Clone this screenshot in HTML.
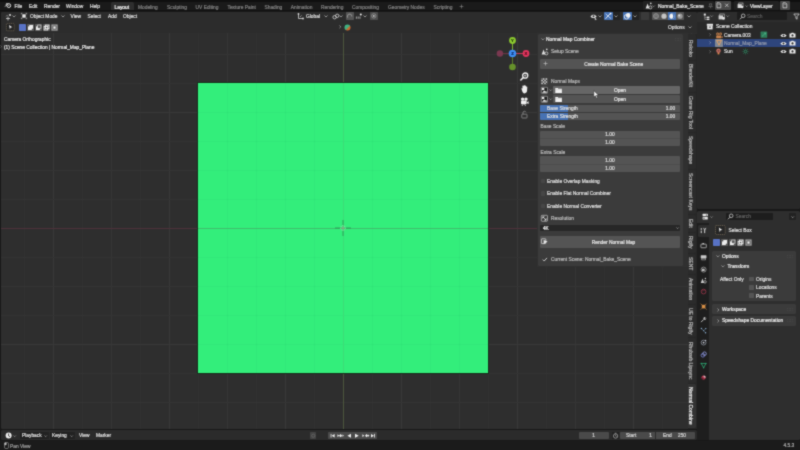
<!DOCTYPE html>
<html><head><meta charset="utf-8"><title>Blender</title>
<style>
html,body{margin:0;padding:0;background:#181818;}
body{width:800px;height:450px;overflow:hidden;position:relative;font-family:"Liberation Sans",sans-serif;}
#r{position:absolute;left:0;top:0;width:800px;height:450px;overflow:hidden;will-change:transform;filter:url(#sb);}
#r div,#r svg{position:absolute;}
#r svg{overflow:visible;}
.t{white-space:nowrap;letter-spacing:0;-webkit-text-stroke:0.22px currentColor;}
.v{writing-mode:vertical-rl;}
</style></head><body><svg width="0" height="0" style="position:absolute"><defs><filter id="sb" x="0" y="0" width="100%" height="100%" color-interpolation-filters="sRGB"><feConvolveMatrix order="3" kernelMatrix="0.03 0.1 0.03 0.1 0.48 0.1 0.03 0.1 0.03" divisor="1" edgeMode="duplicate" preserveAlpha="true"/></filter></defs></svg><div id="r">
<div style="left:0px;top:0px;width:800px;height:450px;background:#181818;"></div>
<div style="left:0px;top:0px;width:800px;height:2px;background:#0f0f0f;"></div>
<div style="left:0px;top:2px;width:800px;height:8.2px;background:#1a1a1a;"></div>
<div style="left:0px;top:10.2px;width:800px;height:1.3px;background:#111111;"></div>
<div style="left:1px;top:11.5px;width:695.5px;height:417.3px;background:#2e2e2e;border-radius:1.5px;"></div>
<div style="left:23.7px;top:11.5px;width:1px;height:417.3px;background:#313131"></div><div style="left:52.7px;top:11.5px;width:1px;height:417.3px;background:#383838"></div><div style="left:81.7px;top:11.5px;width:1px;height:417.3px;background:#313131"></div><div style="left:110.7px;top:11.5px;width:1px;height:417.3px;background:#353535"></div><div style="left:139.7px;top:11.5px;width:1px;height:417.3px;background:#313131"></div><div style="left:168.7px;top:11.5px;width:1px;height:417.3px;background:#383838"></div><div style="left:197.7px;top:11.5px;width:1px;height:417.3px;background:#313131"></div><div style="left:226.7px;top:11.5px;width:1px;height:417.3px;background:#353535"></div><div style="left:255.7px;top:11.5px;width:1px;height:417.3px;background:#313131"></div><div style="left:284.7px;top:11.5px;width:1px;height:417.3px;background:#383838"></div><div style="left:313.7px;top:11.5px;width:1px;height:417.3px;background:#313131"></div><div style="left:371.7px;top:11.5px;width:1px;height:417.3px;background:#313131"></div><div style="left:400.7px;top:11.5px;width:1px;height:417.3px;background:#383838"></div><div style="left:429.7px;top:11.5px;width:1px;height:417.3px;background:#313131"></div><div style="left:458.7px;top:11.5px;width:1px;height:417.3px;background:#353535"></div><div style="left:487.7px;top:11.5px;width:1px;height:417.3px;background:#313131"></div><div style="left:516.7px;top:11.5px;width:1px;height:417.3px;background:#383838"></div><div style="left:545.7px;top:11.5px;width:1px;height:417.3px;background:#313131"></div><div style="left:574.7px;top:11.5px;width:1px;height:417.3px;background:#353535"></div><div style="left:603.7px;top:11.5px;width:1px;height:417.3px;background:#313131"></div><div style="left:632.7px;top:11.5px;width:1px;height:417.3px;background:#383838"></div><div style="left:661.7px;top:11.5px;width:1px;height:417.3px;background:#313131"></div><div style="left:690.7px;top:11.5px;width:1px;height:417.3px;background:#353535"></div><div style="left:1px;top:24.9px;width:695.5px;height:1px;background:#333333"></div><div style="left:1px;top:53.9px;width:695.5px;height:1px;background:#343434"></div><div style="left:1px;top:82.9px;width:695.5px;height:1px;background:#333333"></div><div style="left:1px;top:111.9px;width:695.5px;height:1px;background:#383838"></div><div style="left:1px;top:140.9px;width:695.5px;height:1px;background:#333333"></div><div style="left:1px;top:169.9px;width:695.5px;height:1px;background:#343434"></div><div style="left:1px;top:198.9px;width:695.5px;height:1px;background:#333333"></div><div style="left:1px;top:256.9px;width:695.5px;height:1px;background:#333333"></div><div style="left:1px;top:285.9px;width:695.5px;height:1px;background:#343434"></div><div style="left:1px;top:314.9px;width:695.5px;height:1px;background:#333333"></div><div style="left:1px;top:343.9px;width:695.5px;height:1px;background:#383838"></div><div style="left:1px;top:372.9px;width:695.5px;height:1px;background:#333333"></div><div style="left:1px;top:401.9px;width:695.5px;height:1px;background:#343434"></div>
<div style="left:1px;top:227.9px;width:695.5px;height:1px;background:#4d313a;"></div>
<div style="left:342.7px;top:11.5px;width:1px;height:417.3px;background:#4c563c;"></div>
<div style="left:196.9px;top:81.9px;width:292.3px;height:292.3px;background:#17301c;"></div>
<div style="left:197.8px;top:82.8px;width:290.5px;height:290.5px;background:#33ee7b;"></div>
<div style="left:226.7px;top:83px;width:1px;height:290.3px;background:rgba(40,190,105,0.13);"></div>
<div style="left:198px;top:111.9px;width:290.3px;height:1px;background:rgba(40,190,105,0.13);"></div>
<div style="left:255.7px;top:83px;width:1px;height:290.3px;background:rgba(40,190,105,0.13);"></div>
<div style="left:198px;top:140.9px;width:290.3px;height:1px;background:rgba(40,190,105,0.13);"></div>
<div style="left:284.7px;top:83px;width:1px;height:290.3px;background:rgba(40,190,105,0.13);"></div>
<div style="left:198px;top:169.9px;width:290.3px;height:1px;background:rgba(40,190,105,0.13);"></div>
<div style="left:313.7px;top:83px;width:1px;height:290.3px;background:rgba(40,190,105,0.13);"></div>
<div style="left:198px;top:198.9px;width:290.3px;height:1px;background:rgba(40,190,105,0.13);"></div>
<div style="left:371.7px;top:83px;width:1px;height:290.3px;background:rgba(40,190,105,0.13);"></div>
<div style="left:198px;top:256.9px;width:290.3px;height:1px;background:rgba(40,190,105,0.13);"></div>
<div style="left:400.7px;top:83px;width:1px;height:290.3px;background:rgba(40,190,105,0.13);"></div>
<div style="left:198px;top:285.9px;width:290.3px;height:1px;background:rgba(40,190,105,0.13);"></div>
<div style="left:429.7px;top:83px;width:1px;height:290.3px;background:rgba(40,190,105,0.13);"></div>
<div style="left:198px;top:314.9px;width:290.3px;height:1px;background:rgba(40,190,105,0.13);"></div>
<div style="left:458.7px;top:83px;width:1px;height:290.3px;background:rgba(40,190,105,0.13);"></div>
<div style="left:198px;top:343.9px;width:290.3px;height:1px;background:rgba(40,190,105,0.13);"></div>
<div style="left:198px;top:227.9px;width:290.3px;height:1px;background:#40bd6d;"></div>
<div style="left:342.7px;top:83px;width:1px;height:290.3px;background:#3cdc77;"></div>
<svg style="left:334.2px;top:219.4px;" width="18" height="18" viewBox="0 0 18 18"><path d="M9 1V6.6M9 11.4V17M1 9H6.6M11.4 9H17" stroke="#2f8a52" stroke-width="0.8"/><circle cx="9" cy="9" r="2.4" fill="none" stroke="#d8e6d0" stroke-width="0.7" stroke-dasharray="1 0.9" opacity="0.8"/><circle cx="9" cy="9" r="1.5" fill="#8f9d80" opacity="0.85"/></svg>
<div style="left:1px;top:11.5px;width:695.5px;height:21.5px;background:#2c2c2c;border-radius:1.5px 1.5px 0 0;"></div>
<svg style="left:5px;top:12.5px;" width="8" height="7" viewBox="0 0 8 7"><path d="M1 5.5h4M3 3.5v4" stroke="#d0d0d0" stroke-width="0.8"/><circle cx="5" cy="2" r="1.1" fill="#d0d0d0"/><path d="M1.2 3.4l1.5-1.5" stroke="#d0d0d0" stroke-width="0.6"/></svg>
<svg style="left:12.2px;top:15.05px;" width="4.0" height="2.5" viewBox="0 0 4.0 2.5"><path d="M0.5 0.5 L2.0 2.0 L3.5 0.5" fill="none" stroke="#c0c0c0" stroke-width="0.7"/></svg>
<svg style="left:21.3px;top:13px;" width="6" height="6" viewBox="0 0 6 6"><rect x="1.3" y="1.3" width="3.4" height="3.4" fill="#e6e6e6"/><path d="M0.3 1.4V0.3H1.4M4.6 0.3H5.7V1.4M5.7 4.6V5.7H4.6M1.4 5.7H0.3V4.6" fill="none" stroke="#e6e6e6" stroke-width="0.55"/></svg>
<div class="t" style="top:14.00px;line-height:6px;font-size:4.85px;color:#d9d9d9;left:30px;">Object Mode</div>
<svg style="left:60.5px;top:15.05px;" width="4.0" height="2.5" viewBox="0 0 4.0 2.5"><path d="M0.5 0.5 L2.0 2.0 L3.5 0.5" fill="none" stroke="#c0c0c0" stroke-width="0.7"/></svg>
<div class="t" style="top:14.00px;line-height:6px;font-size:4.85px;color:#d9d9d9;left:70.5px;">View</div>
<div class="t" style="top:14.00px;line-height:6px;font-size:4.85px;color:#d9d9d9;left:87.5px;">Select</div>
<div class="t" style="top:14.00px;line-height:6px;font-size:4.85px;color:#d9d9d9;left:108px;">Add</div>
<div class="t" style="top:14.00px;line-height:6px;font-size:4.85px;color:#d9d9d9;left:123px;">Object</div>
<svg style="left:6.1px;top:23px;" width="8.6" height="8.2" viewBox="0 0 8.6 8.2"><rect x="0.4" y="0.4" width="7.8" height="7.4" rx="0.8" fill="#242424" stroke="#8a7a63" stroke-width="0.55" stroke-dasharray="1.2 0.7"/><path d="M3 2L6.4 4.3L4.6 4.6L3.9 6.3Z" fill="#f0f0f0"/></svg>
<div style="left:18.8px;top:23.9px;width:7.4px;height:7.1px;background:#5872c4;border-radius:0.8px;"></div>
<div style="left:27.1px;top:23.9px;width:7px;height:7.1px;background:#575757;border-radius:0.6px;"></div>
<div style="left:35px;top:23.9px;width:7px;height:7.1px;background:#575757;border-radius:0.6px;"></div>
<div style="left:42.9px;top:23.9px;width:7px;height:7.1px;background:#575757;border-radius:0.6px;"></div>
<div style="left:50.7px;top:23.9px;width:7px;height:7.1px;background:#575757;border-radius:0.6px;"></div>
<svg style="left:27.1px;top:23.9px;" width="7" height="7.1" viewBox="0 0 7 7.1"><rect x="1" y="2.4" width="3.8" height="3.7" fill="#ececec"/><rect x="2.3" y="1" width="3.8" height="3.7" fill="#ececec"/></svg>
<svg style="left:35px;top:23.9px;" width="7" height="7.1" viewBox="0 0 7 7.1"><rect x="1" y="2.4" width="3.8" height="3.7" fill="#ececec"/><rect x="2.7" y="1" width="3.3" height="3.2" fill="#575757" stroke="#ececec" stroke-width="0.6"/></svg>
<svg style="left:42.9px;top:23.9px;" width="7" height="7.1" viewBox="0 0 7 7.1"><rect x="1.1" y="2.4" width="3.6" height="3.6" fill="none" stroke="#ececec" stroke-width="0.9"/><rect x="2.4" y="1.1" width="3.6" height="3.6" fill="none" stroke="#ececec" stroke-width="0.9"/></svg>
<svg style="left:50.7px;top:23.9px;" width="7" height="7.1" viewBox="0 0 7 7.1"><rect x="1" y="1.1" width="5" height="4.9" fill="none" stroke="#bdbdbd" stroke-width="0.7"/><rect x="2.4" y="2.4" width="2.2" height="2.3" fill="#f4f4f4"/></svg>
<div class="t" style="top:37.00px;line-height:6px;font-size:4.85px;color:#e8e8e8;left:4px;text-shadow:0 0 1px #000;">Camera Orthographic</div>
<div class="t" style="top:45.00px;line-height:6px;font-size:4.85px;color:#e8e8e8;left:4px;text-shadow:0 0 1px #000;">(1) Scene Collection | Normal_Map_Plane</div>
<svg style="left:0.25px;top:45.3px;" width="2.1" height="3.2" viewBox="0 0 2.1 3.2"><path d="M0.5 0.5 L1.6 1.6 L0.5 2.7" fill="none" stroke="#9a9a9a" stroke-width="0.5"/></svg>
<svg style="left:297px;top:12.5px;" width="7" height="7" viewBox="0 0 7 7"><path d="M1.5 0.8V5.5H6.2" fill="none" stroke="#d6d6d6" stroke-width="0.8"/><circle cx="1.5" cy="1" r="0.9" fill="#d6d6d6"/><circle cx="6" cy="5.5" r="0.9" fill="#d6d6d6"/><path d="M3 4l1.6-1.6" stroke="#d6d6d6" stroke-width="0.6"/></svg>
<div class="t" style="top:14.00px;line-height:6px;font-size:4.85px;color:#d9d9d9;left:306px;">Global</div>
<svg style="left:323.5px;top:15.05px;" width="4.0" height="2.5" viewBox="0 0 4.0 2.5"><path d="M0.5 0.5 L2.0 2.0 L3.5 0.5" fill="none" stroke="#c0c0c0" stroke-width="0.7"/></svg>
<svg style="left:331.5px;top:12.5px;" width="8" height="7" viewBox="0 0 8 7"><circle cx="2.6" cy="4.2" r="1.7" fill="none" stroke="#d6d6d6" stroke-width="0.8"/><circle cx="5.2" cy="2.8" r="1.7" fill="none" stroke="#d6d6d6" stroke-width="0.8"/></svg>
<svg style="left:339.3px;top:15.05px;" width="4.0" height="2.5" viewBox="0 0 4.0 2.5"><path d="M0.5 0.5 L2.0 2.0 L3.5 0.5" fill="none" stroke="#c0c0c0" stroke-width="0.7"/></svg>
<div style="left:346px;top:12.3px;width:7.6px;height:7.8px;background:#555555;border-radius:0.8px;"></div>
<svg style="left:346px;top:12.3px;" width="7.6" height="7.8" viewBox="0 0 7.6 7.8"><path d="M1.8 5.6A2.2 2.2 0 1 1 5.8 4.4" fill="none" stroke="#8d8d8d" stroke-width="1.1"/></svg>
<svg style="left:354.5px;top:12.5px;" width="8" height="7" viewBox="0 0 8 7"><path d="M0.8 5.2h1.2M2.6 5.2h1.2M4.4 5.2h1.2M0.8 3.8h0M1.4 3.4v1.8M3.2 3.4v1.8M5 3.4v1.8" stroke="#cfcfcf" stroke-width="0.6"/><circle cx="5.8" cy="1.6" r="1" fill="#f0f0f0"/></svg>
<svg style="left:363.0px;top:15.05px;" width="4.0" height="2.5" viewBox="0 0 4.0 2.5"><path d="M0.5 0.5 L2.0 2.0 L3.5 0.5" fill="none" stroke="#c0c0c0" stroke-width="0.7"/></svg>
<div style="left:370px;top:12.3px;width:7.6px;height:7.8px;background:#4e4e4e;border-radius:0.8px;"></div>
<svg style="left:370px;top:12.3px;" width="7.6" height="7.8" viewBox="0 0 7.6 7.8"><circle cx="3.8" cy="3.9" r="2.2" fill="none" stroke="#9c9c9c" stroke-width="0.7"/><circle cx="3.8" cy="3.9" r="0.9" fill="#c9c9c9"/></svg>
<svg style="left:339.15000000000003px;top:25.2px;" width="2.3" height="3.6" viewBox="0 0 2.3 3.6"><path d="M0.5 0.5 L1.8 1.8 L0.5 3.1" fill="none" stroke="#c9c9c9" stroke-width="0.6"/></svg>
<svg style="left:343.5px;top:23.6px;" width="7" height="7" viewBox="0 0 7 7"><defs><linearGradient id="gg" x1="0" y1="0" x2="1" y2="1"><stop offset="0" stop-color="#35c28f"/><stop offset="0.55" stop-color="#4aa878"/><stop offset="0.6" stop-color="#c8692f"/><stop offset="1" stop-color="#d2632c"/></linearGradient></defs><circle cx="3.5" cy="3.5" r="3" fill="url(#gg)"/></svg>
<svg style="left:589.5px;top:12.5px;" width="8" height="7.5" viewBox="0 0 8 7.5"><path d="M0.5 3.4C2 1.2 5 1.2 6.6 3.4C5 5.4 2 5.4 0.5 3.4Z" fill="#e6e6e6"/><circle cx="3.5" cy="3.3" r="1" fill="#303030"/><path d="M4.6 4.4L7 6.6L5.6 6.5L5 7.4Z" fill="#e6e6e6"/></svg>
<svg style="left:597.6px;top:15.05px;" width="4.0" height="2.5" viewBox="0 0 4.0 2.5"><path d="M0.5 0.5 L2.0 2.0 L3.5 0.5" fill="none" stroke="#c0c0c0" stroke-width="0.7"/></svg>
<div style="left:604px;top:12.1px;width:8.6px;height:8.3px;background:#4772b3;border-radius:0.8px;"></div>
<svg style="left:604px;top:12.1px;" width="8.6" height="8.3" viewBox="0 0 8.6 8.3"><path d="M1.5 6.8L6.2 1.6" stroke="#f2f2f2" stroke-width="0.9"/><path d="M1.6 1.8L4.2 4.2L7 6.6" stroke="#d6e2f5" stroke-width="0.8" fill="none"/><circle cx="6.6" cy="1.6" r="0.9" fill="#fff"/></svg>
<div style="left:612.9px;top:12.1px;width:7px;height:8.3px;background:#222222;border-radius:0.8px;"></div>
<svg style="left:614.3px;top:15.05px;" width="4.0" height="2.5" viewBox="0 0 4.0 2.5"><path d="M0.5 0.5 L2.0 2.0 L3.5 0.5" fill="none" stroke="#c0c0c0" stroke-width="0.7"/></svg>
<div style="left:623px;top:12.1px;width:8.6px;height:8.3px;background:#4772b3;border-radius:0.8px;"></div>
<svg style="left:623px;top:12.1px;" width="8.6" height="8.3" viewBox="0 0 8.6 8.3"><circle cx="3.6" cy="4.8" r="2.3" fill="none" stroke="#f2f2f2" stroke-width="0.8"/><circle cx="5.2" cy="3.4" r="2.3" fill="#f2f2f2"/></svg>
<div style="left:631.9px;top:12.1px;width:7px;height:8.3px;background:#222222;border-radius:0.8px;"></div>
<svg style="left:633.3px;top:15.05px;" width="4.0" height="2.5" viewBox="0 0 4.0 2.5"><path d="M0.5 0.5 L2.0 2.0 L3.5 0.5" fill="none" stroke="#c0c0c0" stroke-width="0.7"/></svg>
<div style="left:640.5px;top:12.1px;width:8px;height:8.3px;background:#3a3a3a;border-radius:0.8px;"></div>
<div style="left:652px;top:12.1px;width:32px;height:8.3px;background:#545454;border-radius:0.8px;"></div>
<div style="left:668px;top:12.1px;width:8px;height:8.3px;background:#4772b3;"></div>
<svg style="left:652px;top:12.1px;" width="32" height="8.3" viewBox="0 0 32 8.3"><circle cx="4" cy="4.15" r="2.5" fill="none" stroke="#b8b8b8" stroke-width="0.6"/><circle cx="4" cy="4.15" r="1.3" fill="none" stroke="#b8b8b8" stroke-width="0.5"/><circle cx="12" cy="4.15" r="2.6" fill="#c4c4c4"/><circle cx="20" cy="4.15" r="2.6" fill="#f4f4f4"/><path d="M20 1.55A2.6 2.6 0 0 1 20 6.75A3.4 3.4 0 0 0 20 1.55Z" fill="#4772b3"/><circle cx="28" cy="4.15" r="2.6" fill="#9a9a9a"/><circle cx="27.2" cy="3.4" r="1" fill="#dcdcdc"/></svg>
<svg style="left:686.5px;top:15.05px;" width="4.0" height="2.5" viewBox="0 0 4.0 2.5"><path d="M0.5 0.5 L2.0 2.0 L3.5 0.5" fill="none" stroke="#c0c0c0" stroke-width="0.7"/></svg>
<div class="t" style="top:25.00px;line-height:6px;font-size:4.85px;color:#d9d9d9;left:668px;">Options</div>
<svg style="left:687.5px;top:26.25px;" width="4.0" height="2.5" viewBox="0 0 4.0 2.5"><path d="M0.5 0.5 L2.0 2.0 L3.5 0.5" fill="none" stroke="#c0c0c0" stroke-width="0.7"/></svg>
<svg style="left:495px;top:35.6px;" width="38" height="38" viewBox="-3 -3 38 38"><path d="M14.5 14.5H1.5" stroke="#7a3248" stroke-width="0.8"/><path d="M14.5 14.5V28" stroke="#66912b" stroke-width="0.8"/>
<path d="M14.5 14.5H28" stroke="#d8385c" stroke-width="0.9"/><path d="M14.5 14.5V1.5" stroke="#86c232" stroke-width="0.9"/>
<circle cx="1.9" cy="14.5" r="3.2" fill="#7a3850"/><circle cx="14.5" cy="28" r="3.3" fill="#66912b"/>
<circle cx="28" cy="14.5" r="3.4" fill="#e0355d"/><circle cx="14.5" cy="1.5" r="3.4" fill="#8cc92f"/>
<circle cx="14.5" cy="14.5" r="3.8" fill="#3d8df2"/></svg>
<div class="t" style="top:38.00px;line-height:6px;font-size:4.2px;color:#1d3508;left:462.5px;width:100px;text-align:center;font-weight:bold;">Y</div>
<div class="t" style="top:51.00px;line-height:6px;font-size:4.2px;color:#5c0c1f;left:476px;width:100px;text-align:center;font-weight:bold;">X</div>
<div class="t" style="top:51.00px;line-height:6px;font-size:4.2px;color:#0e2c66;left:462.5px;width:100px;text-align:center;font-weight:bold;">Z</div>
<svg style="left:519px;top:71px;" width="11" height="11" viewBox="0 0 11 11"><circle cx="6.2" cy="4.6" r="2.6" fill="none" stroke="#efefef" stroke-width="1.3"/><path d="M4.2 6.6L1.8 9" stroke="#efefef" stroke-width="1.5" stroke-linecap="round"/><path d="M5 4.6h2.4M6.2 3.4v2.4" stroke="#efefef" stroke-width="0.6"/></svg>
<svg style="left:519px;top:83.5px;" width="11" height="11" viewBox="0 0 11 11"><path d="M2.6 5.2C2 4.4 3 3.8 3.6 4.6L3.4 2.2C3.4 1.4 4.4 1.4 4.5 2.2L4.7 1.4C4.8 0.7 5.8 0.8 5.8 1.6L6 1.9C6.2 1.2 7.1 1.4 7.1 2.1L7.3 2.9C7.6 2.3 8.4 2.6 8.3 3.3L8.1 6.6C8 8.4 7 9.4 5.6 9.4C4.2 9.4 3.4 8.4 2.6 5.2Z" fill="#efefef"/></svg>
<svg style="left:519px;top:96px;" width="11" height="11" viewBox="0 0 11 11"><circle cx="3.6" cy="3.1" r="1.7" fill="#efefef"/><circle cx="7" cy="3.1" r="1.7" fill="#efefef"/><rect x="2" y="4.6" width="5.6" height="3.6" rx="0.6" fill="#efefef"/><path d="M7.6 6.4L9.6 5.2V8L7.6 7Z" fill="#efefef"/><path d="M4 8.2L3 10M5.6 8.2L6.6 10" stroke="#efefef" stroke-width="0.7"/></svg>
<svg style="left:519px;top:108.5px;" width="11" height="11" viewBox="0 0 11 11"><rect x="2.8" y="5.2" width="5.2" height="3.8" rx="0.5" fill="none" stroke="#9b9b9b" stroke-width="0.7"/><path d="M4 5.2V3.6A1.5 1.5 0 0 1 6.9 3.2" fill="none" stroke="#9b9b9b" stroke-width="0.7"/></svg>
<div style="left:537.0px;top:33.2px;width:150.5px;height:233.5px;background:#303030;"></div>
<div style="left:537.8px;top:33.9px;width:145.7px;height:232.4px;background:#3b3b3b;border-radius:1.5px;"></div>
<svg style="left:540.6px;top:37.8px;" width="3.8" height="2.4" viewBox="0 0 3.8 2.4"><path d="M0.5 0.5 L1.9 1.9 L3.3 0.5" fill="none" stroke="#cfcfcf" stroke-width="0.6"/></svg>
<div class="t" style="top:37.00px;line-height:6px;font-size:4.85px;color:#e6e6e6;left:546px;">Normal Map Combiner</div>
<svg style="left:675px;top:37.5px;" width="6" height="3" viewBox="0 0 6 3"><g fill="#555"><circle cx="0.7" cy="0.7" r="0.4"/><circle cx="2.2" cy="0.7" r="0.4"/><circle cx="3.7" cy="0.7" r="0.4"/><circle cx="5.2" cy="0.7" r="0.4"/><circle cx="0.7" cy="2.2" r="0.4"/><circle cx="2.2" cy="2.2" r="0.4"/><circle cx="3.7" cy="2.2" r="0.4"/><circle cx="5.2" cy="2.2" r="0.4"/></g></svg>
<svg style="left:540.5px;top:47.6px;" width="8" height="7.5" viewBox="0 0 8 7.5"><path d="M0.6 6.6L2.6 1.4L4.4 6.6Z" fill="#e2e2e2"/><circle cx="5.4" cy="5.4" r="1.5" fill="none" stroke="#e2e2e2" stroke-width="0.7"/><circle cx="5.8" cy="1.4" r="0.8" fill="#e2e2e2"/></svg>
<div class="t" style="top:49.00px;line-height:6px;font-size:4.85px;color:#b6b6b6;left:551px;">Setup Scene</div>
<div style="left:540.3px;top:58.6px;width:140.0px;height:10.6px;background:#545454;border-radius:1px;"></div>
<svg style="left:543px;top:61.4px;" width="5" height="5" viewBox="0 0 5 5"><path d="M2.5 0.5V4.5M0.5 2.5H4.5" stroke="#c8c8c8" stroke-width="0.6"/></svg>
<div class="t" style="top:62.00px;line-height:6px;font-size:4.85px;color:#e0e0e0;left:563.7px;width:100px;text-align:center;">Create Normal Bake Scene</div>
<svg style="left:541px;top:78px;" width="6.5" height="6.5" viewBox="0 0 6.5 6.5"><rect x="0.3" y="0.3" width="5.9" height="5.9" fill="#d8d8d8"/><g fill="#3b3b3b"><rect x="0.3" y="0.3" width="1.5" height="1.5"/><rect x="3.25" y="0.3" width="1.5" height="1.5"/><rect x="1.8" y="1.8" width="1.5" height="1.5"/><rect x="4.7" y="1.8" width="1.5" height="1.5"/><rect x="0.3" y="3.25" width="1.5" height="1.5"/><rect x="3.25" y="3.25" width="1.5" height="1.5"/><rect x="1.8" y="4.7" width="1.5" height="1.5"/><rect x="4.7" y="4.7" width="1.5" height="1.5"/></g></svg>
<div class="t" style="top:79.00px;line-height:6px;font-size:4.85px;color:#b6b6b6;left:551px;">Normal Maps</div>
<svg style="left:541px;top:86.7px;" width="7" height="6.6" viewBox="0 0 7 6.6"><rect x="0.3" y="0.3" width="6.2" height="6" rx="0.5" fill="#1e1e1e" stroke="#d8d8d8" stroke-width="0.5"/><rect x="0.9" y="0.9" width="2.4" height="2.2" fill="#e8e8e8"/><path d="M1 5.8L3.2 3.4L4.4 4.6L5.2 4L6 5.8Z" fill="#e8e8e8"/></svg>
<svg style="left:548.9px;top:89.2px;" width="3.4" height="2.2" viewBox="0 0 3.4 2.2"><path d="M0.5 0.5 L1.7 1.7 L2.9 0.5" fill="none" stroke="#bdbdbd" stroke-width="0.55"/></svg>
<div style="left:553px;top:86.3px;width:127.29999999999995px;height:7.3px;background:#666666;border-radius:1px;"></div>
<svg style="left:554.8px;top:86.7px;" width="7.4" height="6.6" viewBox="0 0 7.4 6.6"><path d="M0.3 0.9H2.8L3.4 1.8H6.9V6H0.3Z" fill="#f2f2f2"/><path d="M0.3 2.7H6.9" stroke="#a8a8a8" stroke-width="0.3"/></svg>
<div class="t" style="top:88.00px;line-height:6px;font-size:4.85px;color:#e4e4e4;left:570px;width:100px;text-align:center;">Open</div>
<svg style="left:541px;top:95.80000000000001px;" width="7" height="6.6" viewBox="0 0 7 6.6"><rect x="0.3" y="0.3" width="6.2" height="6" rx="0.5" fill="#1e1e1e" stroke="#d8d8d8" stroke-width="0.5"/><rect x="0.9" y="0.9" width="2.4" height="2.2" fill="#e8e8e8"/><path d="M1 5.8L3.2 3.4L4.4 4.6L5.2 4L6 5.8Z" fill="#e8e8e8"/></svg>
<svg style="left:548.9px;top:98.2px;" width="3.4" height="2.2" viewBox="0 0 3.4 2.2"><path d="M0.5 0.5 L1.7 1.7 L2.9 0.5" fill="none" stroke="#bdbdbd" stroke-width="0.55"/></svg>
<div style="left:553px;top:95.4px;width:127.29999999999995px;height:7.2px;background:#545454;border-radius:1px;"></div>
<svg style="left:554.8px;top:95.7px;" width="7.4" height="6.6" viewBox="0 0 7.4 6.6"><path d="M0.3 0.9H2.8L3.4 1.8H6.9V6H0.3Z" fill="#f2f2f2"/><path d="M0.3 2.7H6.9" stroke="#a8a8a8" stroke-width="0.3"/></svg>
<div class="t" style="top:97.00px;line-height:6px;font-size:4.85px;color:#e4e4e4;left:570px;width:100px;text-align:center;">Open</div>
<div style="left:540.3px;top:104.5px;width:140.0px;height:15.6px;background:#545454;border-radius:1px;"></div>
<div style="left:540.3px;top:104.5px;width:27.4px;height:15.6px;background:#4772b3;border-radius:1px 0 0 1px;"></div>
<div style="left:540.3px;top:112.1px;width:140.0px;height:0.5px;background:#3b3b3b;"></div>
<div class="t" style="top:106.00px;line-height:6px;font-size:4.85px;color:#dcdcdc;left:547px;">Base Strength</div>
<div class="t" style="top:114.00px;line-height:6px;font-size:4.85px;color:#dcdcdc;left:547px;">Extra Strength</div>
<div class="t" style="top:106.00px;line-height:6px;font-size:4.85px;color:#dcdcdc;left:575.2px;width:100px;text-align:right;">1.00</div>
<div class="t" style="top:114.00px;line-height:6px;font-size:4.85px;color:#dcdcdc;left:575.2px;width:100px;text-align:right;">1.00</div>
<div class="t" style="top:124.00px;line-height:6px;font-size:4.85px;color:#b6b6b6;left:540.5px;">Base Scale</div>
<div style="left:540.3px;top:131px;width:140.0px;height:14.9px;background:#545454;border-radius:1px;"></div>
<div style="left:540.3px;top:138.3px;width:140.0px;height:0.5px;background:#4d4d4d;"></div>
<div class="t" style="top:132.00px;line-height:6px;font-size:4.85px;color:#dcdcdc;left:560px;width:100px;text-align:center;">1.00</div>
<div class="t" style="top:140.00px;line-height:6px;font-size:4.85px;color:#dcdcdc;left:560px;width:100px;text-align:center;">1.00</div>
<div class="t" style="top:150.00px;line-height:6px;font-size:4.85px;color:#b6b6b6;left:540.5px;">Extra Scale</div>
<div style="left:540.3px;top:156.3px;width:140.0px;height:15.6px;background:#545454;border-radius:1px;"></div>
<div style="left:540.3px;top:164px;width:140.0px;height:0.5px;background:#4d4d4d;"></div>
<div class="t" style="top:158.00px;line-height:6px;font-size:4.85px;color:#dcdcdc;left:560px;width:100px;text-align:center;">1.00</div>
<div class="t" style="top:166.00px;line-height:6px;font-size:4.85px;color:#dcdcdc;left:560px;width:100px;text-align:center;">1.00</div>
<div style="left:541px;top:178.7px;width:4.4px;height:4.6px;background:#464646;border-radius:0.7px;"></div>
<div class="t" style="top:179.00px;line-height:6px;font-size:4.85px;color:#dcdcdc;left:547px;">Enable Overlap Masking</div>
<div style="left:541px;top:191.1px;width:4.4px;height:4.6px;background:#464646;border-radius:0.7px;"></div>
<div class="t" style="top:191.00px;line-height:6px;font-size:4.85px;color:#dcdcdc;left:547px;">Enable Flat Normal Combiner</div>
<div style="left:541px;top:203.6px;width:4.4px;height:4.6px;background:#464646;border-radius:0.7px;"></div>
<div class="t" style="top:204.00px;line-height:6px;font-size:4.85px;color:#dcdcdc;left:547px;">Enable Normal Converter</div>
<svg style="left:541px;top:214.8px;" width="7" height="6.6" viewBox="0 0 7 6.6"><rect x="0.3" y="0.3" width="6.2" height="6" rx="0.8" fill="none" stroke="#d8d8d8" stroke-width="0.6"/><path d="M1.4 1.4H3.8L1.4 3.8Z" fill="#e8e8e8"/><path d="M2 2L4.8 4.8" stroke="#e8e8e8" stroke-width="0.7"/><path d="M3 5.4H5.4V3Z" fill="#e8e8e8"/></svg>
<div class="t" style="top:216.00px;line-height:6px;font-size:4.85px;color:#b6b6b6;left:551px;">Resolution</div>
<div style="left:540.3px;top:224.6px;width:140.0px;height:6.3px;background:#272727;border-radius:1px;"></div>
<div class="t" style="top:226.00px;line-height:6px;font-size:4.7px;color:#ececec;left:543px;">4K</div>
<svg style="left:676.1999999999999px;top:226.95px;" width="3.2" height="2.1" viewBox="0 0 3.2 2.1"><path d="M0.5 0.5 L1.6 1.6 L2.7 0.5" fill="none" stroke="#c8c8c8" stroke-width="0.55"/></svg>
<div style="left:540.3px;top:235.9px;width:140.0px;height:11.8px;background:#545454;border-radius:1px;"></div>
<svg style="left:541px;top:238.4px;" width="8" height="7" viewBox="0 0 8 7"><rect x="0.4" y="0.8" width="4.4" height="4.8" rx="0.5" fill="none" stroke="#e2e2e2" stroke-width="0.7"/><path d="M2.6 2L6.6 3.4L2.6 6.2Z" fill="#e8e8e8"/></svg>
<div class="t" style="top:240.00px;line-height:6px;font-size:4.85px;color:#e0e0e0;left:563.5px;width:100px;text-align:center;">Render Normal Map</div>
<svg style="left:541.5px;top:256.5px;" width="6" height="5" viewBox="0 0 6 5"><path d="M0.8 2.6L2.2 4L5 0.9" fill="none" stroke="#e8e8e8" stroke-width="0.8"/></svg>
<div class="t" style="top:257.00px;line-height:6px;font-size:4.85px;color:#b6b6b6;left:551px;">Current Scene: Normal_Bake_Scene</div>
<svg style="left:592.7px;top:90.3px;" width="6.3" height="9.4" viewBox="0 0 6 9"><path d="M0.8 0.6L0.8 6.8L2.3 5.5L3.3 7.9L4.3 7.5L3.3 5.1L5.2 5Z" fill="#fafafa" stroke="#222" stroke-width="0.45"/></svg>
<div style="left:687.5px;top:33.7px;width:9px;height:395.1px;background:#262626;"></div>
<div style="left:688.3px;top:34px;width:8.2px;height:26px;background:#2b2b2b;border-radius:0 1.5px 1.5px 0;"></div>
<div class="t v" style="left:687.6px;top:40px;width:6px;line-height:6px;font-size:5.0px;color:#b4b4b4;">Rokoko</div>
<div style="left:688.3px;top:61px;width:8.2px;height:30.5px;background:#2b2b2b;border-radius:0 1.5px 1.5px 0;"></div>
<div class="t v" style="left:687.6px;top:64.3px;width:6px;line-height:6px;font-size:5.0px;color:#b4b4b4;">BlenderKit</div>
<div style="left:688.3px;top:92.5px;width:8.2px;height:39.0px;background:#2b2b2b;border-radius:0 1.5px 1.5px 0;"></div>
<div class="t v" style="left:687.6px;top:95.5px;width:6px;line-height:6px;font-size:5.0px;color:#b4b4b4;">Game Rig Tool</div>
<div style="left:688.3px;top:132.5px;width:8.2px;height:36.5px;background:#2b2b2b;border-radius:0 1.5px 1.5px 0;"></div>
<div class="t v" style="left:687.6px;top:136px;width:6px;line-height:6px;font-size:5.0px;color:#b4b4b4;">Speedshape</div>
<div style="left:688.3px;top:170px;width:8.2px;height:44px;background:#2b2b2b;border-radius:0 1.5px 1.5px 0;"></div>
<div class="t v" style="left:687.6px;top:172.8px;width:6px;line-height:6px;font-size:5.0px;color:#b4b4b4;">Screencast Keys</div>
<div style="left:688.3px;top:215px;width:8.2px;height:16.5px;background:#2b2b2b;border-radius:0 1.5px 1.5px 0;"></div>
<div class="t v" style="left:687.6px;top:218.5px;width:6px;line-height:6px;font-size:5.0px;color:#b4b4b4;">Edit</div>
<div style="left:688.3px;top:232.5px;width:8.2px;height:20.0px;background:#2b2b2b;border-radius:0 1.5px 1.5px 0;"></div>
<div class="t v" style="left:687.6px;top:236px;width:6px;line-height:6px;font-size:5.0px;color:#b4b4b4;">Rigify</div>
<div style="left:688.3px;top:253.5px;width:8.2px;height:20.0px;background:#2b2b2b;border-radius:0 1.5px 1.5px 0;"></div>
<div class="t v" style="left:687.6px;top:257px;width:6px;line-height:6px;font-size:5.0px;color:#b4b4b4;">SENT</div>
<div style="left:688.3px;top:274.5px;width:8.2px;height:29.0px;background:#2b2b2b;border-radius:0 1.5px 1.5px 0;"></div>
<div class="t v" style="left:687.6px;top:278px;width:6px;line-height:6px;font-size:5.0px;color:#b4b4b4;">Animation</div>
<div style="left:688.3px;top:304.5px;width:8.2px;height:32.5px;background:#2b2b2b;border-radius:0 1.5px 1.5px 0;"></div>
<div class="t v" style="left:687.6px;top:307.8px;width:6px;line-height:6px;font-size:5.0px;color:#b4b4b4;">UE to Rigify</div>
<div style="left:688.3px;top:338px;width:8.2px;height:44.5px;background:#2b2b2b;border-radius:0 1.5px 1.5px 0;"></div>
<div class="t v" style="left:687.6px;top:342px;width:6px;line-height:6px;font-size:5.0px;color:#b4b4b4;">Rhubarb Lipsync</div>
<div style="left:688.3px;top:383.5px;width:8.2px;height:44.0px;background:#333333;border-radius:0 1.5px 1.5px 0;"></div>
<div class="t v" style="left:687.6px;top:387px;width:6px;line-height:6px;font-size:5.0px;color:#ececec;">Normal Combine</div>
<svg style="left:3.5px;top:2px;" width="8" height="7" viewBox="0 0 8 7"><circle cx="4.8" cy="3.6" r="1.9" fill="none" stroke="#e4e4e4" stroke-width="1"/><circle cx="4.8" cy="3.6" r="0.5" fill="#e4e4e4"/><path d="M0.7 4.5L3 3M2 1.5L4.6 1.8M1.6 2.7H3.2" stroke="#e4e4e4" stroke-width="0.7"/></svg>
<div class="t" style="top:4.00px;line-height:6px;font-size:4.85px;color:#dadada;left:14.5px;">File</div>
<div class="t" style="top:4.00px;line-height:6px;font-size:4.85px;color:#dadada;left:29px;">Edit</div>
<div class="t" style="top:4.00px;line-height:6px;font-size:4.85px;color:#dadada;left:44px;">Render</div>
<div class="t" style="top:4.00px;line-height:6px;font-size:4.85px;color:#dadada;left:66px;">Window</div>
<div class="t" style="top:4.00px;line-height:6px;font-size:4.85px;color:#dadada;left:90px;">Help</div>
<div style="left:110.5px;top:2.1px;width:23.3px;height:8.2px;background:#2e2e2e;border-radius:1.5px 1.5px 0 0;"></div>
<div class="t" style="top:5.00px;line-height:6px;font-size:4.85px;color:#f2f2f2;left:114.5px;">Layout</div>
<div class="t" style="top:5.00px;line-height:6px;font-size:4.85px;color:#7e7e7e;left:138px;">Modeling</div>
<div class="t" style="top:5.00px;line-height:6px;font-size:4.85px;color:#7e7e7e;left:167px;">Sculpting</div>
<div class="t" style="top:5.00px;line-height:6px;font-size:4.85px;color:#7e7e7e;left:195.6px;">UV Editing</div>
<div class="t" style="top:5.00px;line-height:6px;font-size:4.85px;color:#7e7e7e;left:227.5px;">Texture Paint</div>
<div class="t" style="top:5.00px;line-height:6px;font-size:4.85px;color:#7e7e7e;left:264.5px;">Shading</div>
<div class="t" style="top:5.00px;line-height:6px;font-size:4.85px;color:#7e7e7e;left:290.8px;">Animation</div>
<div class="t" style="top:5.00px;line-height:6px;font-size:4.85px;color:#7e7e7e;left:321px;">Rendering</div>
<div class="t" style="top:5.00px;line-height:6px;font-size:4.85px;color:#7e7e7e;left:352px;">Compositing</div>
<div class="t" style="top:5.00px;line-height:6px;font-size:4.85px;color:#7e7e7e;left:388px;">Geometry Nodes</div>
<div class="t" style="top:5.00px;line-height:6px;font-size:4.85px;color:#7e7e7e;left:433.5px;">Scripting</div>
<svg style="left:458.5px;top:4px;" width="5" height="5" viewBox="0 0 5 5"><path d="M2.5 0.6V4.4M0.6 2.5H4.4" stroke="#8a8a8a" stroke-width="0.6"/></svg>
<div style="left:642.7px;top:1.3px;width:71.3px;height:8.6px;background:#222222;border-radius:1px;"></div>
<svg style="left:644.5px;top:2px;" width="8" height="7.5" viewBox="0 0 8 7.5"><path d="M0.6 6.6L2.6 1.4L4.4 6.6Z" fill="#e2e2e2"/><circle cx="5.4" cy="5.4" r="1.5" fill="none" stroke="#e2e2e2" stroke-width="0.7"/><circle cx="5.8" cy="1.4" r="0.8" fill="#e2e2e2"/></svg>
<svg style="left:652.3px;top:4.9px;" width="3.4" height="2.2" viewBox="0 0 3.4 2.2"><path d="M0.5 0.5 L1.7 1.7 L2.9 0.5" fill="none" stroke="#bdbdbd" stroke-width="0.55"/></svg>
<div class="t" style="top:4.00px;line-height:6px;font-size:4.85px;color:#e0e0e0;left:658px;">Normal_Bake_Scene</div>
<svg style="left:707.5px;top:3px;" width="5" height="5.5" viewBox="0 0 5 5.5"><path d="M1.4 0.8H3.8L3.4 2.6L4.4 3.6H0.8L1.8 2.6Z" fill="none" stroke="#8a8a8a" stroke-width="0.5"/><path d="M2.6 3.6V5.2" stroke="#8a8a8a" stroke-width="0.5"/></svg>
<div style="left:715px;top:1.3px;width:7.6px;height:8.6px;background:#4a4a4a;border-radius:1px 0 0 1px;"></div>
<div style="left:723px;top:1.3px;width:7.6px;height:8.6px;background:#4a4a4a;border-radius:0 1px 1px 0;"></div>
<svg style="left:715px;top:1.3px;" width="7.6" height="8.6" viewBox="0 0 7.6 8.6"><path d="M2 1.8H4.6L5.8 3V6.8H2Z" fill="none" stroke="#e0e0e0" stroke-width="0.7"/><path d="M3.2 3.2H5" stroke="#e0e0e0" stroke-width="0.5"/></svg>
<svg style="left:723px;top:1.3px;" width="7.6" height="8.6" viewBox="0 0 7.6 8.6"><path d="M2.2 2.7L5.4 5.9M5.4 2.7L2.2 5.9" stroke="#d8d8d8" stroke-width="0.7"/></svg>
<div style="left:734px;top:1.3px;width:44.8px;height:8.6px;background:#222222;border-radius:1px;"></div>
<svg style="left:736.5px;top:2.3px;" width="8" height="7" viewBox="0 0 8 7"><rect x="0.6" y="2.2" width="4.2" height="3.8" fill="#d8d8d8"/><rect x="1.8" y="1" width="4.2" height="3.8" fill="none" stroke="#d8d8d8" stroke-width="0.6"/><circle cx="5.2" cy="5" r="1.2" fill="#e8e8e8"/></svg>
<svg style="left:744.8px;top:4.9px;" width="3.4" height="2.2" viewBox="0 0 3.4 2.2"><path d="M0.5 0.5 L1.7 1.7 L2.9 0.5" fill="none" stroke="#bdbdbd" stroke-width="0.55"/></svg>
<div class="t" style="top:4.00px;line-height:6px;font-size:4.85px;color:#e0e0e0;left:750px;">ViewLayer</div>
<div style="left:779.8px;top:1.3px;width:10.6px;height:8.6px;background:#4a4a4a;border-radius:1px;"></div>
<svg style="left:781.3px;top:1.3px;" width="7.6" height="8.6" viewBox="0 0 7.6 8.6"><path d="M2 1.8H4.6L5.8 3V6.8H2Z" fill="none" stroke="#e0e0e0" stroke-width="0.7"/><path d="M3.2 3.2H5" stroke="#e0e0e0" stroke-width="0.5"/></svg>
<div style="left:697px;top:11.5px;width:103px;height:197.3px;background:#282828;border-radius:1.5px;"></div>
<div style="left:697px;top:11.5px;width:103px;height:10.5px;background:#2d2d2d;border-radius:1.5px 1.5px 0 0;"></div>
<svg style="left:702.5px;top:12.5px;" width="8" height="8" viewBox="0 0 8 8"><rect x="0.8" y="0.6" width="2" height="2" fill="#e6e6e6"/><path d="M1.8 2.6V6.4H4M1.8 4.4H4" stroke="#bdbdbd" stroke-width="0.5" fill="none"/><rect x="3.8" y="3.6" width="2.6" height="1.4" fill="#e6e6e6"/><rect x="3.8" y="5.6" width="2.6" height="1.4" fill="#e6e6e6"/></svg>
<svg style="left:710.0999999999999px;top:15.4px;" width="3.4" height="2.2" viewBox="0 0 3.4 2.2"><path d="M0.5 0.5 L1.7 1.7 L2.9 0.5" fill="none" stroke="#bdbdbd" stroke-width="0.55"/></svg>
<svg style="left:717.5px;top:12.5px;" width="9" height="8" viewBox="0 0 9 8"><rect x="0.6" y="2.4" width="4.4" height="4" fill="#d0d0d0"/><rect x="1.8" y="1" width="4.4" height="4" fill="none" stroke="#d0d0d0" stroke-width="0.6"/><circle cx="5.6" cy="5.4" r="1.3" fill="#e8e8e8"/></svg>
<svg style="left:726.3px;top:15.4px;" width="3.4" height="2.2" viewBox="0 0 3.4 2.2"><path d="M0.5 0.5 L1.7 1.7 L2.9 0.5" fill="none" stroke="#bdbdbd" stroke-width="0.55"/></svg>
<div style="left:737px;top:12.4px;width:49.5px;height:8px;background:#1d1d1d;border-radius:1px;"></div>
<svg style="left:738.5px;top:13px;" width="7" height="7" viewBox="0 0 7 7"><circle cx="4.2" cy="2.8" r="1.8" fill="none" stroke="#e0e0e0" stroke-width="0.7"/><path d="M3 4.2L0.9 6.3" stroke="#e0e0e0" stroke-width="0.8"/></svg>
<div class="t" style="top:14.00px;line-height:6px;font-size:4.85px;color:#585858;left:747px;">Search</div>
<svg style="left:792.5px;top:13px;" width="7" height="7" viewBox="0 0 7 7"><path d="M0.8 1H6.2L4.1 3.6V6.2L2.9 5.4V3.6Z" fill="none" stroke="#e0e0e0" stroke-width="0.7"/></svg>
<svg style="left:705.5px;top:23px;" width="8" height="7.5" viewBox="0 0 8 7.5"><rect x="0.8" y="0.8" width="6.2" height="2" fill="#ececec"/><rect x="1.2" y="3" width="5.4" height="3.4" fill="#ececec"/><rect x="2.8" y="3.7" width="2.2" height="0.8" fill="#282828"/></svg>
<div class="t" style="top:24.00px;line-height:6px;font-size:4.85px;color:#dedede;left:716px;">Scene Collection</div>
<svg style="left:708.9px;top:33.3px;" width="2.2" height="3.4" viewBox="0 0 2.2 3.4"><path d="M0.5 0.5 L1.7 1.7 L0.5 2.9" fill="none" stroke="#a0a0a0" stroke-width="0.55"/></svg>
<svg style="left:714.8px;top:31.5px;" width="8" height="7" viewBox="0 0 8 7"><circle cx="2.6" cy="2" r="1.4" fill="#c9824c"/><circle cx="5.6" cy="2" r="1.4" fill="#c9824c"/><rect x="1.2" y="3.4" width="5" height="2.8" rx="0.5" fill="#c9824c"/><path d="M6.2 4.8L7.6 4V6L6.2 5.4Z" fill="#c9824c"/><circle cx="2.6" cy="2" r="0.6" fill="#282828"/><circle cx="5.6" cy="2" r="0.6" fill="#282828"/></svg>
<div class="t" style="top:33.00px;line-height:6px;font-size:4.85px;color:#dedede;left:724px;">Camera.003</div>
<svg style="left:759.5px;top:31.3px;" width="8" height="7.5" viewBox="0 0 8 7.5"><rect x="0.6" y="0.6" width="6.6" height="6.2" rx="0.6" fill="#2e7d5a"/><path d="M2 5.4L5.6 2M4 2H5.6V3.6" stroke="#5ed0a0" stroke-width="0.5" fill="none"/></svg>
<svg style="left:780px;top:32.5px;" width="7" height="5" viewBox="0 0 7 5"><path d="M0.4 2.5C2 0.4 5 0.4 6.6 2.5C5 4.6 2 4.6 0.4 2.5Z" fill="#f0f0f0"/><circle cx="3.5" cy="2.5" r="1" fill="#282828"/></svg>
<svg style="left:788.5px;top:32px;" width="7" height="6" viewBox="0 0 7 6"><path d="M0.5 1.6H2L2.6 0.7H4.4L5 1.6H6.5V5.4H0.5Z" fill="#f0f0f0"/><circle cx="3.5" cy="3.4" r="1.1" fill="#282828"/></svg>
<div style="left:697px;top:39px;width:103px;height:8px;background:#2e457c;"></div>
<svg style="left:708.9px;top:41.3px;" width="2.2" height="3.4" viewBox="0 0 2.2 3.4"><path d="M0.5 0.5 L1.7 1.7 L0.5 2.9" fill="none" stroke="#b0b8d0" stroke-width="0.55"/></svg>
<div style="left:714.6px;top:39.3px;width:8px;height:7.4px;background:#7f8794;border-radius:0.8px;"></div>
<svg style="left:714.6px;top:39.3px;" width="8" height="7.4" viewBox="0 0 8 7.4"><path d="M1.6 1.4H6.4L4 6.2Z" fill="none" stroke="#e8a060" stroke-width="0.9"/></svg>
<div class="t" style="top:41.00px;line-height:6px;font-size:4.85px;color:#8e95a8;left:724px;">Normal_Map_Plane</div>
<svg style="left:780px;top:40.5px;" width="7" height="5" viewBox="0 0 7 5"><path d="M0.4 2.5C2 0.4 5 0.4 6.6 2.5C5 4.6 2 4.6 0.4 2.5Z" fill="#f0f0f0"/><circle cx="3.5" cy="2.5" r="1" fill="#282828"/></svg>
<svg style="left:788.5px;top:40px;" width="7" height="6" viewBox="0 0 7 6"><path d="M0.5 1.6H2L2.6 0.7H4.4L5 1.6H6.5V5.4H0.5Z" fill="#f0f0f0"/><circle cx="3.5" cy="3.4" r="1.1" fill="#282828"/></svg>
<svg style="left:708.9px;top:49.599999999999994px;" width="2.2" height="3.4" viewBox="0 0 2.2 3.4"><path d="M0.5 0.5 L1.7 1.7 L0.5 2.9" fill="none" stroke="#a0a0a0" stroke-width="0.55"/></svg>
<svg style="left:715px;top:48px;" width="7" height="7" viewBox="0 0 7 7"><circle cx="3.5" cy="2.8" r="2.2" fill="#d07264"/><circle cx="3.5" cy="2.8" r="1" fill="#282828" opacity="0.55"/><rect x="2.6" y="5" width="1.8" height="1.4" fill="#e08a4a"/></svg>
<div class="t" style="top:49.00px;line-height:6px;font-size:4.85px;color:#dedede;left:724px;">Sun</div>
<svg style="left:741.5px;top:47.8px;" width="7" height="7" viewBox="0 0 7 7"><circle cx="3.5" cy="3.5" r="1.3" fill="none" stroke="#2fb37a" stroke-width="0.6"/><path d="M3.5 0.6V1.4M3.5 5.6V6.4M0.6 3.5H1.4M5.6 3.5H6.4M1.4 1.4L2 2M5 5L5.6 5.6M5.6 1.4L5 2M2 5L1.4 5.6" stroke="#2fb37a" stroke-width="0.5"/></svg>
<svg style="left:780px;top:48.8px;" width="7" height="5" viewBox="0 0 7 5"><path d="M0.4 2.5C2 0.4 5 0.4 6.6 2.5C5 4.6 2 4.6 0.4 2.5Z" fill="#f0f0f0"/><circle cx="3.5" cy="2.5" r="1" fill="#282828"/></svg>
<svg style="left:788.5px;top:48.3px;" width="7" height="6" viewBox="0 0 7 6"><path d="M0.5 1.6H2L2.6 0.7H4.4L5 1.6H6.5V5.4H0.5Z" fill="#f0f0f0"/><circle cx="3.5" cy="3.4" r="1.1" fill="#282828"/></svg>
<div style="left:697px;top:210.5px;width:103px;height:229.5px;background:#2e2e2e;border-radius:1.5px;"></div>
<svg style="left:702px;top:212.5px;" width="9" height="8" viewBox="0 0 9 8"><rect x="0.6" y="0.8" width="5.2" height="2.4" rx="0.5" fill="#e6e6e6"/><rect x="0.6" y="4" width="5.2" height="2.4" rx="0.5" fill="#e6e6e6"/><circle cx="4.4" cy="2" r="0.6" fill="#303030"/><circle cx="2" cy="5.2" r="0.6" fill="#303030"/></svg>
<svg style="left:709.9px;top:216.14999999999998px;" width="3.2" height="2.1" viewBox="0 0 3.2 2.1"><path d="M0.5 0.5 L1.6 1.6 L2.7 0.5" fill="none" stroke="#bdbdbd" stroke-width="0.55"/></svg>
<div style="left:725.8px;top:212.9px;width:47.2px;height:6.9px;background:#1d1d1d;border-radius:1px;"></div>
<svg style="left:727.3px;top:213px;" width="7" height="7" viewBox="0 0 7 7"><circle cx="4.2" cy="2.8" r="1.8" fill="none" stroke="#e0e0e0" stroke-width="0.7"/><path d="M3 4.2L0.9 6.3" stroke="#e0e0e0" stroke-width="0.8"/></svg>
<div class="t" style="top:214.00px;line-height:6px;font-size:4.85px;color:#5e5e5e;left:735.5px;">Search</div>
<div style="left:788.8px;top:212.9px;width:7.4px;height:6.9px;background:#222222;border-radius:1px;"></div>
<svg style="left:790.8px;top:215.70000000000002px;" width="3.4" height="2.2" viewBox="0 0 3.4 2.2"><path d="M0.5 0.5 L1.7 1.7 L2.9 0.5" fill="none" stroke="#c8c8c8" stroke-width="0.6"/></svg>
<div style="left:697px;top:222.5px;width:12px;height:217.5px;background:#1e1e1e;"></div>
<div style="left:698.3px;top:224.5px;width:10.7px;height:12px;background:#2e2e2e;border-radius:1.5px 0 0 1.5px;"></div>
<svg style="left:699.8px;top:226.9px;opacity:0.9;" width="7.2" height="7.2" viewBox="0 0 8 8"><path d="M1.4 1.2V3.2M1.4 4V6.8" stroke="#ececec" stroke-width="1.1"/><path d="M4 1L5.2 3.6L6.6 1" stroke="#ececec" stroke-width="0.9" fill="none"/><path d="M5.2 3.4V6.8" stroke="#ececec" stroke-width="1.1"/></svg>
<svg style="left:699.8px;top:242.4px;opacity:0.9;" width="7.2" height="7.2" viewBox="0 0 8 8"><rect x="1" y="2.4" width="6" height="4" rx="0.5" fill="none" stroke="#dcdcdc" stroke-width="0.8"/><rect x="2.6" y="1.2" width="2" height="1.2" fill="#dcdcdc"/></svg>
<svg style="left:699.8px;top:253.9px;opacity:0.9;" width="7.2" height="7.2" viewBox="0 0 8 8"><rect x="0.8" y="1.4" width="6.4" height="3.2" rx="0.5" fill="#dcdcdc"/><rect x="2" y="4.6" width="4" height="2" fill="none" stroke="#dcdcdc" stroke-width="0.6"/></svg>
<svg style="left:699.8px;top:265.7px;opacity:0.9;" width="7.2" height="7.2" viewBox="0 0 8 8"><circle cx="4" cy="4" r="2.8" fill="none" stroke="#cfcfcf" stroke-width="0.7"/><rect x="2.2" y="3" width="3" height="2.6" fill="#cfcfcf"/></svg>
<svg style="left:699.8px;top:277.0px;opacity:0.9;" width="7.2" height="7.2" viewBox="0 0 8 8"><path d="M0.8 6.6L2.8 1.6L4.6 6.6Z" fill="#e2e2e2"/><circle cx="5.6" cy="5.4" r="1.4" fill="none" stroke="#e2e2e2" stroke-width="0.7"/><circle cx="6" cy="1.6" r="0.8" fill="#e2e2e2"/></svg>
<svg style="left:699.8px;top:288.4px;opacity:0.9;" width="7.2" height="7.2" viewBox="0 0 8 8"><circle cx="4" cy="4" r="2.6" fill="none" stroke="#a8384e" stroke-width="0.9"/><path d="M2 3C3.4 4 4 2.4 5.6 2.2" stroke="#a8384e" stroke-width="0.6" fill="none"/></svg>
<svg style="left:699.8px;top:303.4px;opacity:0.9;" width="7.2" height="7.2" viewBox="0 0 8 8"><rect x="2" y="2" width="4" height="4" fill="#e89a4a"/><path d="M0.8 0.8L2 2M7.2 0.8L6 2M0.8 7.2L2 6M7.2 7.2L6 6" stroke="#e89a4a" stroke-width="0.8"/></svg>
<svg style="left:699.8px;top:315.7px;opacity:0.9;" width="7.2" height="7.2" viewBox="0 0 8 8"><path d="M1.2 6.8L4.2 3.8" stroke="#d8d8d8" stroke-width="1.1"/><path d="M3.8 3.4A1.9 1.9 0 0 1 6.4 1.2L5.2 2.4L5.8 3.2L7 2A1.9 1.9 0 0 1 4.6 4.2Z" fill="#d8d8d8"/></svg>
<svg style="left:699.8px;top:327.2px;opacity:0.9;" width="7.2" height="7.2" viewBox="0 0 8 8"><circle cx="1.6" cy="1.6" r="0.8" fill="#9fc4e8"/><circle cx="6.4" cy="1.8" r="0.8" fill="#9fc4e8"/><circle cx="4" cy="4" r="0.7" fill="#9fc4e8"/><circle cx="6.2" cy="6.4" r="0.8" fill="#9fc4e8"/><path d="M1.6 1.6L6.2 6.4M6.4 1.8L4 4" stroke="#7ea6cc" stroke-width="0.5"/></svg>
<svg style="left:699.8px;top:339.0px;opacity:0.9;" width="7.2" height="7.2" viewBox="0 0 8 8"><circle cx="4" cy="4" r="2.7" fill="none" stroke="#b8c0d0" stroke-width="0.7"/><circle cx="4" cy="4" r="1" fill="#e0e4f0"/><circle cx="6.3" cy="1.6" r="0.7" fill="#e0e4f0"/></svg>
<svg style="left:699.8px;top:351.2px;opacity:0.9;" width="7.2" height="7.2" viewBox="0 0 8 8"><circle cx="3.2" cy="4.8" r="2" fill="none" stroke="#7a86d8" stroke-width="1"/><circle cx="5" cy="3" r="2" fill="none" stroke="#9aa4ea" stroke-width="1"/></svg>
<svg style="left:699.8px;top:362.2px;opacity:0.9;" width="7.2" height="7.2" viewBox="0 0 8 8"><path d="M1.4 1.6H6.6L4 6.4Z" fill="none" stroke="#2fb37a" stroke-width="0.9"/><circle cx="1.4" cy="1.6" r="0.8" fill="#2fb37a"/><circle cx="6.6" cy="1.6" r="0.8" fill="#2fb37a"/><circle cx="4" cy="6.4" r="0.8" fill="#2fb37a"/></svg>
<svg style="left:699.8px;top:374.4px;opacity:0.9;" width="7.2" height="7.2" viewBox="0 0 8 8"><circle cx="4" cy="4" r="2.4" fill="#c83a54"/><path d="M4 1.6A2.4 2.4 0 0 1 6.4 4H4Z" fill="#e8d8dc"/><path d="M4 6.4A2.4 2.4 0 0 1 1.6 4H4Z" fill="#7a2034"/></svg>
<svg style="left:714.7px;top:225px;" width="10.7" height="10" viewBox="0 0 10.7 10"><rect x="0.5" y="0.5" width="9.7" height="9" rx="0.8" fill="#262626" stroke="#8a7a63" stroke-width="0.6" stroke-dasharray="1.2 0.7"/><path d="M3.8 2.6L7.4 5L5.5 5.3L4.7 7.2Z" fill="#f0f0f0"/></svg>
<div class="t" style="top:228.00px;line-height:6px;font-size:4.85px;color:#dcdcdc;left:728.5px;">Select Box</div>
<div style="left:713px;top:238.7px;width:7.2px;height:7.1px;background:#5872c4;border-radius:0.8px;"></div>
<div style="left:721.2px;top:238.7px;width:7px;height:7.1px;background:#575757;border-radius:0.6px;"></div>
<div style="left:729.2px;top:238.7px;width:7px;height:7.1px;background:#575757;border-radius:0.6px;"></div>
<div style="left:737.2px;top:238.7px;width:7px;height:7.1px;background:#575757;border-radius:0.6px;"></div>
<div style="left:745.1px;top:238.7px;width:7px;height:7.1px;background:#575757;border-radius:0.6px;"></div>
<svg style="left:721.2px;top:238.7px;" width="7" height="7.1" viewBox="0 0 7 7.1"><rect x="1" y="2.4" width="3.8" height="3.7" fill="#ececec"/><rect x="2.3" y="1" width="3.8" height="3.7" fill="#ececec"/></svg>
<svg style="left:729.2px;top:238.7px;" width="7" height="7.1" viewBox="0 0 7 7.1"><rect x="1" y="2.4" width="3.8" height="3.7" fill="#ececec"/><rect x="2.7" y="1" width="3.3" height="3.2" fill="#575757" stroke="#ececec" stroke-width="0.6"/></svg>
<svg style="left:737.2px;top:238.7px;" width="7" height="7.1" viewBox="0 0 7 7.1"><rect x="1.1" y="2.4" width="3.6" height="3.6" fill="none" stroke="#ececec" stroke-width="0.9"/><rect x="2.4" y="1.1" width="3.6" height="3.6" fill="none" stroke="#ececec" stroke-width="0.9"/></svg>
<svg style="left:745.1px;top:238.7px;" width="7" height="7.1" viewBox="0 0 7 7.1"><rect x="1" y="1.1" width="5" height="4.9" fill="none" stroke="#bdbdbd" stroke-width="0.7"/><rect x="2.4" y="2.4" width="2.2" height="2.3" fill="#f4f4f4"/></svg>
<div style="left:712px;top:251px;width:84.3px;height:50.3px;background:#3b3b3b;border-radius:1.5px;"></div>
<svg style="left:716.4px;top:255.40000000000003px;" width="3.8" height="2.4" viewBox="0 0 3.8 2.4"><path d="M0.5 0.5 L1.9 1.9 L3.3 0.5" fill="none" stroke="#cfcfcf" stroke-width="0.6"/></svg>
<div class="t" style="top:254.00px;line-height:6px;font-size:4.85px;color:#e6e6e6;left:722px;">Options</div>
<svg style="left:787px;top:255px;" width="6" height="3" viewBox="0 0 6 3"><g fill="#565656"><circle cx="0.7" cy="0.7" r="0.4"/><circle cx="2.2" cy="0.7" r="0.4"/><circle cx="3.7" cy="0.7" r="0.4"/><circle cx="5.2" cy="0.7" r="0.4"/><circle cx="0.7" cy="2.2" r="0.4"/><circle cx="2.2" cy="2.2" r="0.4"/><circle cx="3.7" cy="2.2" r="0.4"/><circle cx="5.2" cy="2.2" r="0.4"/></g></svg>
<svg style="left:721.4px;top:265.2px;" width="3.8" height="2.4" viewBox="0 0 3.8 2.4"><path d="M0.5 0.5 L1.9 1.9 L3.3 0.5" fill="none" stroke="#cfcfcf" stroke-width="0.6"/></svg>
<div class="t" style="top:264.00px;line-height:6px;font-size:4.85px;color:#e6e6e6;left:727.5px;">Transform</div>
<div class="t" style="top:277.00px;line-height:6px;font-size:4.85px;color:#dcdcdc;left:720px;">Affect Only</div>
<div style="left:749.2px;top:276.5px;width:4.8px;height:4.8px;background:#545454;border-radius:0.7px;"></div>
<div class="t" style="top:277.00px;line-height:6px;font-size:4.85px;color:#dcdcdc;left:756px;">Origins</div>
<div style="left:749.2px;top:284.90000000000003px;width:4.8px;height:4.8px;background:#545454;border-radius:0.7px;"></div>
<div class="t" style="top:285.00px;line-height:6px;font-size:4.85px;color:#dcdcdc;left:756px;">Locations</div>
<div style="left:749.2px;top:293.20000000000005px;width:4.8px;height:4.8px;background:#545454;border-radius:0.7px;"></div>
<div class="t" style="top:294.00px;line-height:6px;font-size:4.85px;color:#dcdcdc;left:756px;">Parents</div>
<div style="left:712px;top:304.4px;width:84.3px;height:10px;background:#3b3b3b;border-radius:1.5px;"></div>
<svg style="left:717.0999999999999px;top:307.5px;" width="2.4" height="3.8" viewBox="0 0 2.4 3.8"><path d="M0.5 0.5 L1.9 1.9 L0.5 3.3" fill="none" stroke="#cfcfcf" stroke-width="0.6"/></svg>
<div class="t" style="top:307.00px;line-height:6px;font-size:4.85px;color:#e6e6e6;left:722px;">Workspace</div>
<svg style="left:787px;top:308px;" width="6" height="3" viewBox="0 0 6 3"><g fill="#565656"><circle cx="0.7" cy="0.7" r="0.4"/><circle cx="2.2" cy="0.7" r="0.4"/><circle cx="3.7" cy="0.7" r="0.4"/><circle cx="5.2" cy="0.7" r="0.4"/><circle cx="0.7" cy="2.2" r="0.4"/><circle cx="2.2" cy="2.2" r="0.4"/><circle cx="3.7" cy="2.2" r="0.4"/><circle cx="5.2" cy="2.2" r="0.4"/></g></svg>
<div style="left:712px;top:315.6px;width:84.3px;height:10px;background:#3b3b3b;border-radius:1.5px;"></div>
<svg style="left:717.0999999999999px;top:318.6px;" width="2.4" height="3.8" viewBox="0 0 2.4 3.8"><path d="M0.5 0.5 L1.9 1.9 L0.5 3.3" fill="none" stroke="#cfcfcf" stroke-width="0.6"/></svg>
<div class="t" style="top:318.00px;line-height:6px;font-size:4.85px;color:#e6e6e6;left:722px;">Speedshape Documentation</div>
<svg style="left:787px;top:319.2px;" width="6" height="3" viewBox="0 0 6 3"><g fill="#565656"><circle cx="0.7" cy="0.7" r="0.4"/><circle cx="2.2" cy="0.7" r="0.4"/><circle cx="3.7" cy="0.7" r="0.4"/><circle cx="5.2" cy="0.7" r="0.4"/><circle cx="0.7" cy="2.2" r="0.4"/><circle cx="2.2" cy="2.2" r="0.4"/><circle cx="3.7" cy="2.2" r="0.4"/><circle cx="5.2" cy="2.2" r="0.4"/></g></svg>
<div style="left:1px;top:430px;width:695.5px;height:10.3px;background:#2b2b2b;border-radius:1.5px;"></div>
<svg style="left:4.5px;top:432px;" width="7.5" height="7.5" viewBox="0 0 7.5 7.5"><circle cx="3.6" cy="3.6" r="3" fill="#ececec"/><path d="M3.6 1.6V3.8L5 4.8" stroke="#2b2b2b" stroke-width="0.8" fill="none"/></svg>
<svg style="left:12.5px;top:434.9px;" width="3.4" height="2.2" viewBox="0 0 3.4 2.2"><path d="M0.5 0.5 L1.7 1.7 L2.9 0.5" fill="none" stroke="#bdbdbd" stroke-width="0.55"/></svg>
<div style="left:19.5px;top:431.5px;width:29.5px;height:7.8px;background:#222222;border-radius:1px;"></div>
<div style="left:50px;top:431.5px;width:24.5px;height:7.8px;background:#222222;border-radius:1px;"></div>
<div class="t" style="top:433.00px;line-height:6px;font-size:4.85px;color:#dadada;left:22px;">Playback</div>
<svg style="left:44.3px;top:434.9px;" width="3.4" height="2.2" viewBox="0 0 3.4 2.2"><path d="M0.5 0.5 L1.7 1.7 L2.9 0.5" fill="none" stroke="#bdbdbd" stroke-width="0.55"/></svg>
<div class="t" style="top:433.00px;line-height:6px;font-size:4.85px;color:#dadada;left:52px;">Keying</div>
<svg style="left:69.8px;top:434.9px;" width="3.4" height="2.2" viewBox="0 0 3.4 2.2"><path d="M0.5 0.5 L1.7 1.7 L2.9 0.5" fill="none" stroke="#bdbdbd" stroke-width="0.55"/></svg>
<div class="t" style="top:433.00px;line-height:6px;font-size:4.85px;color:#dadada;left:79px;">View</div>
<div class="t" style="top:433.00px;line-height:6px;font-size:4.85px;color:#dadada;left:96px;">Marker</div>
<div style="left:309.8px;top:431.8px;width:6.6px;height:7.4px;background:#444444;border-radius:0.8px;"></div>
<svg style="left:309.8px;top:431.8px;" width="6.6" height="7.4" viewBox="0 0 6.6 7.4"><circle cx="3.3" cy="3.7" r="1.6" fill="none" stroke="#6e6e6e" stroke-width="0.6"/></svg>
<div style="left:328px;top:431.8px;width:48.5px;height:7.4px;background:#4a4a4a;border-radius:0.8px;"></div>
<svg style="left:328px;top:431.8px;" width="48.5" height="7.4" viewBox="0 0 48.5 7.4"><g fill="#f0f0f0"><rect x="2.6" y="1.9" width="0.8" height="3.6"/><path d="M6.6 1.9V5.5L3.6 3.7Z"/><path d="M11 3.7L12.6 2.1L14.2 3.7L12.6 5.3Z"/><path d="M11.4 3.7L9.4 2.3V5.1Z"/><path d="M16 3.7L14.4 2.6V4.8Z"/><path d="M23 1.7V5.7L19.4 3.7Z"/><path d="M27 1.7V5.7L30.8 3.7Z"/><path d="M37 3.7L38.6 2.1L40.2 3.7L38.6 5.3Z"/><path d="M34.4 2.3V5.1L36.4 3.7Z"/><path d="M40 2.6V4.8L41.6 3.7Z"/><rect x="46.2" y="1.9" width="0.8" height="3.6"/><path d="M43 1.9V5.5L46 3.7Z"/></g></svg>
<div style="left:579px;top:431.5px;width:30px;height:7.5px;background:#4a4a4a;border-radius:1px;"></div>
<div class="t" style="top:433.00px;line-height:6px;font-size:4.85px;color:#d2d2d2;left:543.5px;width:100px;text-align:center;">1</div>
<div style="left:612px;top:431.5px;width:7.2px;height:7.5px;background:#222222;border-radius:1px;"></div>
<svg style="left:612px;top:431.5px;" width="7.2" height="7.5" viewBox="0 0 7.2 7.5"><circle cx="3.6" cy="4" r="2.2" fill="none" stroke="#c8c8c8" stroke-width="0.6"/><path d="M3.6 2.6V4.1L4.6 4.6M2.8 1.2H4.4" stroke="#c8c8c8" stroke-width="0.5" fill="none"/></svg>
<div style="left:619.6px;top:431.5px;width:35.6px;height:7.5px;background:#4a4a4a;border-radius:1px 0 0 1px;"></div>
<div style="left:655.7px;top:431.5px;width:39px;height:7.5px;background:#4a4a4a;border-radius:0 1px 1px 0;"></div>
<div class="t" style="top:433.00px;line-height:6px;font-size:4.85px;color:#d2d2d2;left:626px;">Start</div>
<div class="t" style="top:433.00px;line-height:6px;font-size:4.85px;color:#d2d2d2;left:600.5px;width:100px;text-align:center;">1</div>
<div class="t" style="top:433.00px;line-height:6px;font-size:4.85px;color:#d2d2d2;left:663px;">End</div>
<div class="t" style="top:433.00px;line-height:6px;font-size:4.85px;color:#d2d2d2;left:632px;width:100px;text-align:center;">250</div>
<div style="left:0px;top:441px;width:800px;height:9px;background:#1b1b1b;"></div>
<svg style="left:3.8px;top:442px;" width="5" height="7" viewBox="0 0 5 7"><rect x="0.5" y="0.5" width="4" height="6" rx="1.2" fill="none" stroke="#a0a0a0" stroke-width="0.6"/><rect x="0.5" y="0.5" width="2" height="2.8" rx="0.8" fill="#bdbdbd"/></svg>
<div class="t" style="top:444.00px;line-height:6px;font-size:4.85px;color:#9a9a9a;left:10px;">Pan View</div>
<div class="t" style="top:443.00px;line-height:6px;font-size:4.85px;color:#a8a8a8;left:783.5px;">4.5.3</div>
</div></body></html>
